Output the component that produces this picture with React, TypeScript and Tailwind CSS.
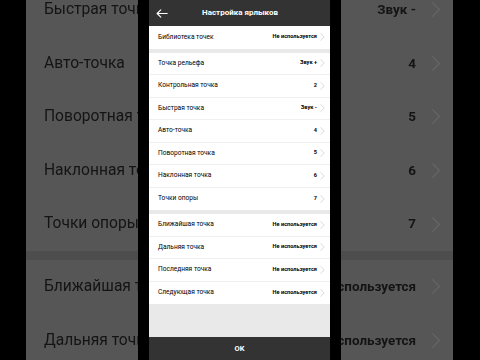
import React from "react";

type Item = { label: string; value: string };

const groupA: Item[] = [{ label: "Библиотека точек", value: "Не используется" }];
const groupB: Item[] = [
  { label: "Точка рельефа", value: "Звук +" },
  { label: "Контрольная точка", value: "2" },
  { label: "Быстрая точка", value: "Звук -" },
  { label: "Авто-точка", value: "4" },
  { label: "Поворотная точка", value: "5" },
  { label: "Наклонная точка", value: "6" },
  { label: "Точки опоры", value: "7" },
];
const groupC: Item[] = [
  { label: "Ближайшая точка", value: "Не используется" },
  { label: "Дальняя точка", value: "Не используется" },
  { label: "Последняя точка", value: "Не используется" },
  { label: "Следующая точка", value: "Не используется" },
];

function Chevron({ w, h, color, sw }: { w: number; h: number; color: string; sw: number }) {
  return (
    <svg width={w} height={h} viewBox="0 0 5 8" fill="none" className="shrink-0">
      <path d="M0.8 0.6 L4.2 4 L0.8 7.4" stroke={color} strokeWidth={sw} strokeLinecap="round" strokeLinejoin="round" />
    </svg>
  );
}

function Row({ item, last }: { item: Item; last?: boolean }) {
  return (
    <div
      className={
        "h-[22.5px] shrink-0 flex items-center bg-white pl-[9px] pr-[5px] " +
        (last ? "" : "border-b border-[#f0f0f0]")
      }
    >
      <span className="text-[6.6px] text-black leading-none">{item.label}</span>
      <span className="ml-auto text-[5.6px] font-bold text-black leading-none">{item.value}</span>
      <span className="ml-[3px] flex items-center">
        <Chevron w={5} h={8} color="#c9c9c9" sw={0.7} />
      </span>
    </div>
  );
}

const bgLeft = [
  { t: "Быстрая точка", gapBefore: false },
  { t: "Авто-точка", gapBefore: false },
  { t: "Поворотная точка", gapBefore: false },
  { t: "Наклонная точка", gapBefore: false },
  { t: "Точки опоры", gapBefore: false },
  { t: "Ближайшая точка", gapBefore: true },
  { t: "Дальняя точка", gapBefore: false },
];
const bgRight = [
  { t: "Звук -", gapBefore: false },
  { t: "4", gapBefore: false },
  { t: "5", gapBefore: false },
  { t: "6", gapBefore: false },
  { t: "7", gapBefore: false },
  { t: "Не используется", gapBefore: true },
  { t: "Не используется", gapBefore: false },
];

function BgPanel({ side }: { side: "left" | "right" }) {
  const rows = side === "left" ? bgLeft : bgRight;
  return (
    <div className="w-[112px] h-full shrink-0 overflow-hidden bg-[#565656]">
      <div className="flex flex-col mt-[-17px] blur-[0.7px]">
        {rows.map((r, i) => (
          <React.Fragment key={i}>
            {r.gapBefore && <div className="h-[9px] shrink-0 bg-[#4d4d4d]" />}
            {side === "left" ? (
              <div className="h-[53.6px] shrink-0 flex items-center pl-[18px] whitespace-nowrap">
                <span className="text-[15.6px] text-[#141414] leading-none">{r.t}</span>
              </div>
            ) : (
              <div className="h-[53.6px] shrink-0 flex items-center justify-end pr-[12px] whitespace-nowrap">
                <span className="text-[13.4px] font-bold text-[#141414] leading-none">{r.t}</span>
                <span className="ml-[15px] flex items-center">
                  <Chevron w={10} h={17} color="#666" sw={0.6} />
                </span>
              </div>
            )}
          </React.Fragment>
        ))}
      </div>
    </div>
  );
}

export default function App() {
  return (
    <div
      className="w-[480px] h-[360px] bg-black flex overflow-hidden"
      style={{ fontFamily: "Roboto, 'Noto Sans', sans-serif" }}
    >
      <div className="w-[26px] shrink-0" />
      <BgPanel side="left" />
      <div className="w-[11px] shrink-0" />
      <div className="w-[181px] h-full shrink-0 flex flex-col bg-[#e9e9e9]">
        <div className="h-[26px] shrink-0 bg-[#333333] flex items-center pl-[7px]">
          <svg width="12" height="9" viewBox="0 0 12 9" fill="none">
            <path d="M11.2 4.5 H1.2 M4.8 0.8 L1.1 4.5 L4.8 8.2" stroke="#fff" strokeWidth="1.1" strokeLinecap="round" strokeLinejoin="round" />
          </svg>
          <span className="ml-[34px] text-[8px] font-bold text-white leading-none">Настройка ярлыков</span>
        </div>
        <div className="flex flex-col">
          {groupA.map((it, i) => (
            <Row key={i} item={it} last />
          ))}
        </div>
        <div className="h-[4px] shrink-0" />
        <div className="flex flex-col">
          {groupB.map((it, i) => (
            <Row key={i} item={it} last={i === groupB.length - 1} />
          ))}
        </div>
        <div className="h-[4px] shrink-0" />
        <div className="flex flex-col">
          {groupC.map((it, i) => (
            <Row key={i} item={it} last={i === groupC.length - 1} />
          ))}
        </div>
        <div className="flex-1" />
        <div className="h-[23px] shrink-0 bg-[#333333] flex items-center justify-center">
          <span className="text-[7.5px] font-bold text-white leading-none">OK</span>
        </div>
      </div>
      <div className="w-[11px] shrink-0" />
      <BgPanel side="right" />
    </div>
  );
}
